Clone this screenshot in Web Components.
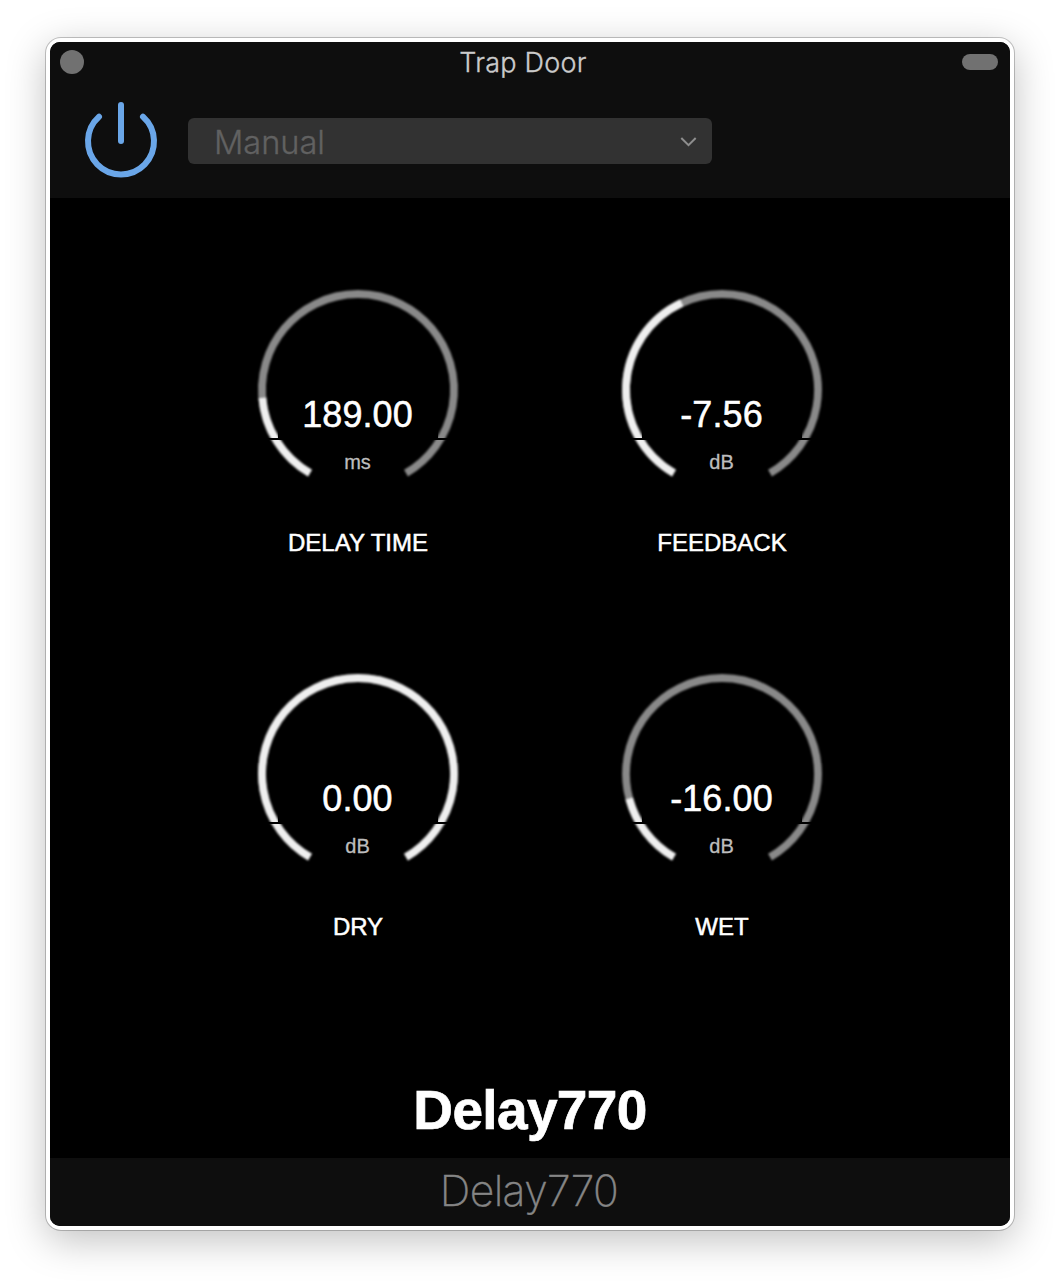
<!DOCTYPE html>
<html lang="en">
<head>
<meta charset="utf-8">
<title>Trap Door</title>
<style>
body{margin:0;background:#fff;font-family:"Liberation Sans",Arial,sans-serif}
</style>
</head>
<body>
<plugin-window>
  <title-bar slot="title">Trap Door</title-bar>
  <plugin-toolbar slot="toolbar"><power-button></power-button><preset-select>Manual</preset-select></plugin-toolbar>
  <dial-knob sweep="55.3" value="189.00" unit="ms">DELAY TIME</dial-knob>
  <dial-knob sweep="125.2" value="-7.56" unit="dB">FEEDBACK</dial-knob>
  <dial-knob sweep="300" value="0.00" unit="dB">DRY</dial-knob>
  <dial-knob sweep="45.2" value="-16.00" unit="dB">WET</dial-knob>
  <span slot="brand">Delay770</span>
  <span slot="footer">Delay770</span>
</plugin-window>
<script>
class Base extends HTMLElement {
  constructor() {
    super();
    this.attachShadow({ mode: "open" });
  }
  connectedCallback() { this.shadowRoot.innerHTML = this.render(); }
}

customElements.define("plugin-window", class extends Base {
  render() {
    return `<style>
      :host{display:block;box-sizing:border-box;height:1284px;padding:38px 46px 54px;overflow:hidden}
      .frame{box-sizing:border-box;height:1192px;padding:4px;border-radius:15px;background:#fff;
        box-shadow:0 0 0 1px rgba(0,0,0,.22),0 10px 39px rgba(0,0,0,.25)}
      .inner{height:100%;border-radius:10px;overflow:hidden;background:#000;display:flex;flex-direction:column}
      header{height:156px;background:#0e0e0e;display:flex;flex-direction:column}
      main{flex:1;display:flex;flex-direction:column}
      .grid{display:grid;grid-template-columns:200px 200px;column-gap:164px;grid-auto-rows:384px;padding:92px 0 0 208px}
      .brand{margin-top:20px;text-align:center;color:#fff;font:bold 55px/64px "Liberation Sans",Arial,sans-serif;letter-spacing:-.65px;-webkit-text-stroke:.7px #fff}
      footer{height:68px;background:#0e0e0e;color:#858585;text-align:center;font:200 42.6px/65px Inter,sans-serif;letter-spacing:-.6px;padding-right:2px;-webkit-text-stroke:.4px #858585}
    </style>
    <div class="frame"><div class="inner">
      <header><slot name="title"></slot><slot name="toolbar"></slot></header>
      <main><div class="grid"><slot></slot></div><div class="brand"><slot name="brand"></slot></div></main>
      <footer><slot name="footer"></slot></footer>
    </div></div>`;
  }
});

customElements.define("title-bar", class extends Base {
  render() {
    return `<style>
      :host{display:flex;align-items:center;justify-content:space-between;height:40px;padding:0 12px 0 10px;
        font:300 27px/40px Inter,sans-serif;letter-spacing:.25px;color:#cbcbcb}
      .close{width:24px;height:24px;border-radius:50%;background:#717171}
      .text{padding-top:2px;height:40px;-webkit-text-stroke:.35px #cbcbcb}
      .pill{width:36px;height:16px;border-radius:8px;background:#717171}
    </style><div class="close"></div><div class="text"><slot></slot></div><div class="pill"></div>`;
  }
});

customElements.define("plugin-toolbar", class extends Base {
  render() {
    return `<style>:host{display:flex;align-items:flex-start;gap:30px;padding:18px 0 0 34px}</style><slot></slot>`;
  }
});

customElements.define("power-button", class extends Base {
  render() {
    return `<style>:host{display:block;width:74px;height:80px}svg{display:block}</style>
    <svg width="74" height="80" viewBox="84 100 74 80" fill="none" stroke="#6aa6e8" stroke-width="6" stroke-linecap="round">
      <path d="M99 116.8A33 33 0 1 0 143 116.8"/><path d="M121 105V141"/></svg>`;
  }
});

customElements.define("preset-select", class extends Base {
  render() {
    return `<style>
      :host{display:flex;align-items:center;justify-content:space-between;box-sizing:border-box;width:524px;height:46px;margin-top:18px;
        padding:0 15px 0 26px;border-radius:6px;background:#323232;color:#616161;font:300 32.6px/46px Inter,sans-serif;letter-spacing:-.05px}
      .text{padding-top:2px;-webkit-text-stroke:.35px #616161}
      svg{display:block;margin-top:2px}
    </style><div class="text"><slot></slot></div>
    <svg width="17" height="12" viewBox="680 136 17 12" fill="none" stroke="#8e8e8e" stroke-width="2"><path d="M681.3 138L688.5 145.2L695.7 138"/></svg>`;
  }
});

customElements.define("dial-knob", class extends Base {
  arc(sweep) {
    const point = deg => {
      const a = (deg + 30) * Math.PI / 180;
      return (100 - 96 * Math.sin(a)).toFixed(2) + " " + (100 + 96 * Math.cos(a)).toFixed(2);
    };
    return `M${point(0)}A96 96 0 ${sweep > 180 ? 1 : 0} 1 ${point(sweep)}`;
  }
  render() {
    return `<style>
      :host{display:grid;width:200px;height:270px;color:#fff;text-align:center}
      svg,.readout{grid-area:1/1}
      svg{display:block;overflow:visible}
      .arcs{filter:blur(.8px)}
      .readout{display:flex;flex-direction:column;padding-top:103px;-webkit-text-stroke:.5px currentColor}
      .value{font-size:36px;line-height:44px;letter-spacing:.1px;margin-right:1px}
      .unit{margin-top:13px;font-size:20px;line-height:24px;color:#bdbdbd;margin-right:1px;-webkit-text-stroke-width:.3px}
      .label{margin-top:55px;font-size:24px;line-height:28px;white-space:nowrap}
    </style>
    <svg width="200" height="200" viewBox="0 0 200 200">
      <g class="arcs" fill="none" stroke-width="7.8">
        <path d="${this.arc(300)}" stroke="#898989"/>
        <path d="${this.arc(+this.getAttribute("sweep"))}" stroke="#efefef"/>
      </g>
      <rect x="20" y="100" width="160" height="50"/><rect x="0" y="148" width="200" height="2"/>
    </svg>
    <div class="readout">
      <div class="value">${this.getAttribute("value")}</div>
      <div class="unit">${this.getAttribute("unit")}</div>
      <div class="label"><slot></slot></div>
    </div>`;
  }
});
</script>
</body>
</html>
